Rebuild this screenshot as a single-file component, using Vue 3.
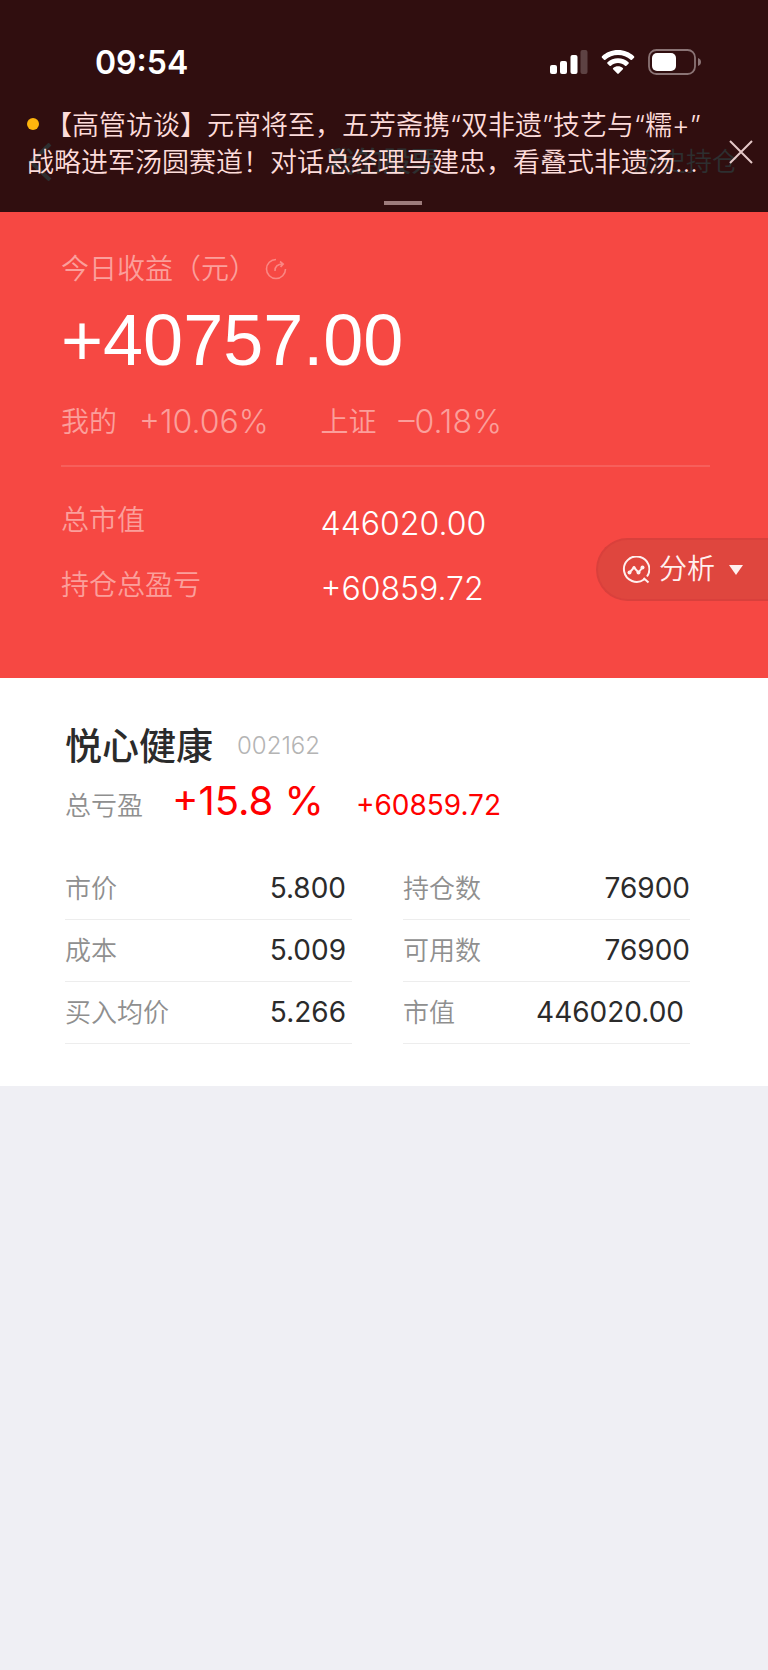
<script setup>
const stats = [
  { label: '总市值', value: '446020.00' },
  { label: '持仓总盈亏', value: '+60859.72' },
]
const columns = [
  [
    { label: '市价', value: '5.800', inset: true },
    { label: '成本', value: '5.009', inset: true },
    { label: '买入均价', value: '5.266', inset: true },
  ],
  [
    { label: '持仓数', value: '76900' },
    { label: '可用数', value: '76900' },
    { label: '市值', value: '446020.00', inset: true },
  ],
]
</script>

<template>
  <div class="page" lang="zh-CN">
    <header class="top">
      <nav class="nav">
        <a class="back" href="#" aria-label="返回">
          <svg width="24" height="38" viewBox="0 0 24 38"><path d="M22 1L3 19l19 18" /></svg>
        </a>
        <span class="nav-title">我的股票</span>
        <a class="history" href="#">历史持仓</a>
      </nav>

      <div class="status">
        <span class="time">09:54</span>
        <div class="status-icons">
          <svg width="38" height="24" viewBox="0 0 38 24" fill="#fff">
            <rect x="0" y="15" width="7" height="9" rx="2" />
            <rect x="10" y="11" width="7" height="13" rx="2" />
            <rect x="20.500" y="5" width="7" height="19" rx="2" />
            <rect x="30.500" y="0" width="7" height="24" rx="2" opacity=".22" />
          </svg>
          <svg width="34" height="24" viewBox="0 0 34 24" fill="#fff">
            <path d="M17 0C10.500 0 5 2.400 1 6.200c-.5.5-.5 1 0 1.500l2 2c.4.4.9.4 1.400 0C7.800 6.600 12.200 5 17 5s9.200 1.600 12.600 4.700c.5.4 1 .4 1.400 0l2-2c.5-.5.5-1 0-1.500C29 2.400 23.500 0 17 0z" />
            <path d="M17 8.200c-4 0-7.700 1.500-10.500 4-.5.5-.5 1 0 1.500l2.100 2c.4.400.9.400 1.400 0 1.900-1.600 4.300-2.600 7-2.600s5.100 1 7 2.600c.5.4 1 .4 1.400 0l2.100-2c.5-.5.5-1 0-1.500-2.800-2.500-6.500-4-10.500-4z" />
            <path d="M17 16.200c-1.800 0-3.500.6-4.800 1.700-.5.4-.5.9-.1 1.400l4.200 4.300c.4.400 1 .4 1.400 0l4.200-4.300c.4-.5.4-1-.1-1.400-1.300-1.100-3-1.700-4.800-1.700z" />
          </svg>
          <svg width="54" height="26" viewBox="0 0 54 26">
            <rect x="1" y="1" width="46" height="24" rx="7.500" fill="none" stroke="#8b7475" stroke-width="1.800" />
            <rect x="4" y="4" width="24" height="18" rx="5" fill="#fff" />
            <path d="M50 9c2 .7 3 2.200 3 4s-1 3.300-3 4z" fill="#8b7475" />
          </svg>
        </div>
      </div>

      <div class="news">
        <p class="news-text"><i class="dot"></i>【高管访谈】元宵将至，五芳斋携“双非遗”技艺与“糯+”<br />战略进军汤圆赛道！对话总经理马建忠，看叠式非遗汤…</p>
        <button class="close" type="button" aria-label="关闭">
          <svg width="24" height="24" viewBox="0 0 24 24"><path d="M1 1l22 22M23 1L1 23" /></svg>
        </button>
      </div>
      <div class="handle"></div>
    </header>

    <section class="summary">
      <div class="today-label">
        <span>今日收益（元）</span>
        <svg width="22" height="22" viewBox="0 0 22 22">
          <path d="M11 1.500A9.500 9.500 0 1 0 20.500 11" />
          <path d="M10 13c-.3-4.500 2.500-7 8-7M15 3.500L18.200 6l-2.600 3" />
        </svg>
      </div>
      <div class="today">+40757.00</div>
      <div class="compare">
        <div class="pair"><span>我的</span><span class="rate">+10.06%</span></div>
        <div class="pair"><span>上证</span><span class="rate">–0.18%</span></div>
      </div>
      <dl class="stats">
        <div v-for="s in stats" :key="s.label" class="stat">
          <dt>{{ s.label }}</dt>
          <dd>{{ s.value }}</dd>
        </div>
      </dl>
      <button class="analyse" type="button">
        <svg class="chart" width="28" height="28" viewBox="0 0 28 28">
          <path d="M22 23.500A12.700 12.700 0 1 1 25 20.500M21.500 22l5 4.500" />
          <path d="M7.500 16.500l4.500-5 4.500 5 4-5" />
          <g class="points">
            <circle cx="7.500" cy="16.500" r="2" /><circle cx="12" cy="11.500" r="1.600" />
            <circle cx="16.500" cy="16.500" r="2" /><circle cx="20.500" cy="11.500" r="2" />
          </g>
        </svg>
        <span>分析</span>
        <svg class="caret" width="14" height="10" viewBox="0 0 14 10"><path d="M0 0h14L7 10z" /></svg>
      </button>
    </section>

    <section class="holding">
      <div class="head">
        <h1>悦心健康</h1>
        <span class="code">002162</span>
      </div>
      <div class="profit">
        <span class="profit-label">总亏盈</span>
        <span class="percent">+15.8 %</span>
        <span class="amount">+60859.72</span>
      </div>
      <div class="details">
        <dl v-for="(rows, i) in columns" :key="i">
          <div v-for="r in rows" :key="r.label" class="row">
            <dt>{{ r.label }}</dt>
            <dd :class="{ inset: r.inset }">{{ r.value }}</dd>
          </div>
        </dl>
      </div>
    </section>
  </div>
</template>

<style>
body {
  background: #efeff4;
}
</style>

<style scoped>
.page {
  font-family: Inter, "Noto Sans CJK SC", sans-serif;
  font-weight: 350;
  overflow: hidden;
}
p, h1, dl, dd {
  margin: 0;
}
button {
  border: 0;
  padding: 0;
  background: none;
  font: inherit;
  color: inherit;
}
a {
  color: inherit;
  text-decoration: none;
}
svg {
  display: block;
  flex: none;
}
.top {
  position: relative;
  box-sizing: border-box;
  height: 212px;
  padding-top: 42px;
  background: #300e0f;
}
.nav {
  position: absolute;
  inset: 143px 30px auto 28px;
  display: grid;
  grid-template-columns: 1fr auto 1fr;
  align-items: center;
  height: 38px;
  color: #2d2f30;
  font-size: 26px;
  line-height: 36px;
}
.back path {
  fill: none;
  stroke: #2d2f30;
  stroke-width: 4;
}
.nav-title {
  font-size: 28px;
  font-weight: 500;
}
.history {
  justify-self: end;
}
.status {
  display: flex;
  justify-content: space-between;
  align-items: center;
  height: 40px;
  padding: 0 66px 0 95px;
  color: #fff;
}
.time {
  font-size: 32px;
  font-weight: 600;
}
.status-icons {
  display: flex;
  align-items: center;
  gap: 13px;
}
.news {
  position: relative;
  display: flex;
  justify-content: space-between;
  align-items: center;
  padding: 25px 15px 0 27px;
}
.news-text {
  color: #fddcda;
  font-size: 27px;
  line-height: 37px;
  white-space: nowrap;
}
.dot {
  display: inline-block;
  width: 12px;
  height: 12px;
  margin-right: 6px;
  border-radius: 50%;
  background: #fdb40d;
  vertical-align: 5px;
}
.close {
  padding-top: 16px;
}
.close path {
  stroke: #e5c8c7;
  stroke-width: 2;
}
.handle {
  width: 38px;
  height: 4px;
  margin: 20px auto 0;
  position: relative;
  left: 19px;
  background: #9d7c7c;
}
.summary {
  position: relative;
  padding: 37px 58px 65px 61px;
  background: #f64843;
  color: #fb9f9b;
  font-size: 28px;
}
.today-label {
  display: flex;
  align-items: center;
  gap: 8px;
  line-height: 40px;
}
.today-label path {
  fill: none;
  stroke: #fa8783;
  stroke-width: 1.6;
}
.today {
  margin-top: 11px;
  color: #fff;
  font-family: "Liberation Sans", Arial, sans-serif;
  font-size: 72px;
  font-weight: 400;
  line-height: 80px;
}
.compare {
  display: grid;
  grid-template-columns: 2fr 3fr;
  margin-top: 22px;
  padding-bottom: 23px;
  border-bottom: 2px solid #f75f5b;
  line-height: 40px;
}
.pair {
  display: flex;
  gap: 22px;
}
.rate {
  font-size: 32px;
}
.stats {
  display: grid;
  gap: 17px;
  padding-top: 33px;
}
.stat {
  display: grid;
  grid-template-columns: 2fr 3fr;
  line-height: 40px;
}
.stat dd {
  color: #fff;
  font-size: 32px;
  line-height: 48px;
}
.analyse {
  position: absolute;
  right: 0;
  bottom: 77px;
  display: flex;
  align-items: center;
  box-sizing: border-box;
  height: 63px;
  padding: 0 25px 0 24px;
  border: 2px solid #d9403c;
  border-right: 0;
  border-radius: 32px 0 0 32px;
  background: #df463e;
  color: #fff0ef;
  line-height: 40px;
}
.analyse span {
  margin: 0 14px 2px 9px;
}
.chart path {
  fill: none;
  stroke: #fff0ef;
  stroke-width: 2;
}
.chart .points, .caret {
  fill: #fff0ef;
}
.holding {
  padding: 45px 78px 42px 65px;
  background: #fff;
}
.head {
  display: flex;
  align-items: center;
  gap: 24px;
  height: 48px;
}
h1 {
  color: #2b2b2b;
  font-size: 37px;
  font-weight: 500;
  line-height: 50px;
}
.code {
  padding-bottom: 4px;
  color: #b4b4b4;
  font-size: 24px;
}
.profit {
  display: flex;
  align-items: baseline;
  height: 66px;
  color: #f00;
  font-weight: 400;
  line-height: 60px;
}
.profit-label {
  margin-right: 29px;
  color: #8f8f8f;
  font-size: 26px;
  font-weight: 350;
}
.percent {
  margin-right: 32px;
  font-size: 40px;
}
.amount {
  font-size: 28px;
}
.details {
  display: grid;
  grid-template-columns: 1fr 1fr;
  gap: 51px;
  padding-top: 21px;
}
.row {
  display: flex;
  justify-content: space-between;
  line-height: 61px;
  border-bottom: 1px solid #ededed;
}
.row dt {
  color: #8f8f8f;
  font-size: 26px;
}
.row dd {
  color: #2b2b2b;
  font-size: 28px;
  font-weight: 400;
}
.row .inset {
  padding-right: 6px;
}
</style>
